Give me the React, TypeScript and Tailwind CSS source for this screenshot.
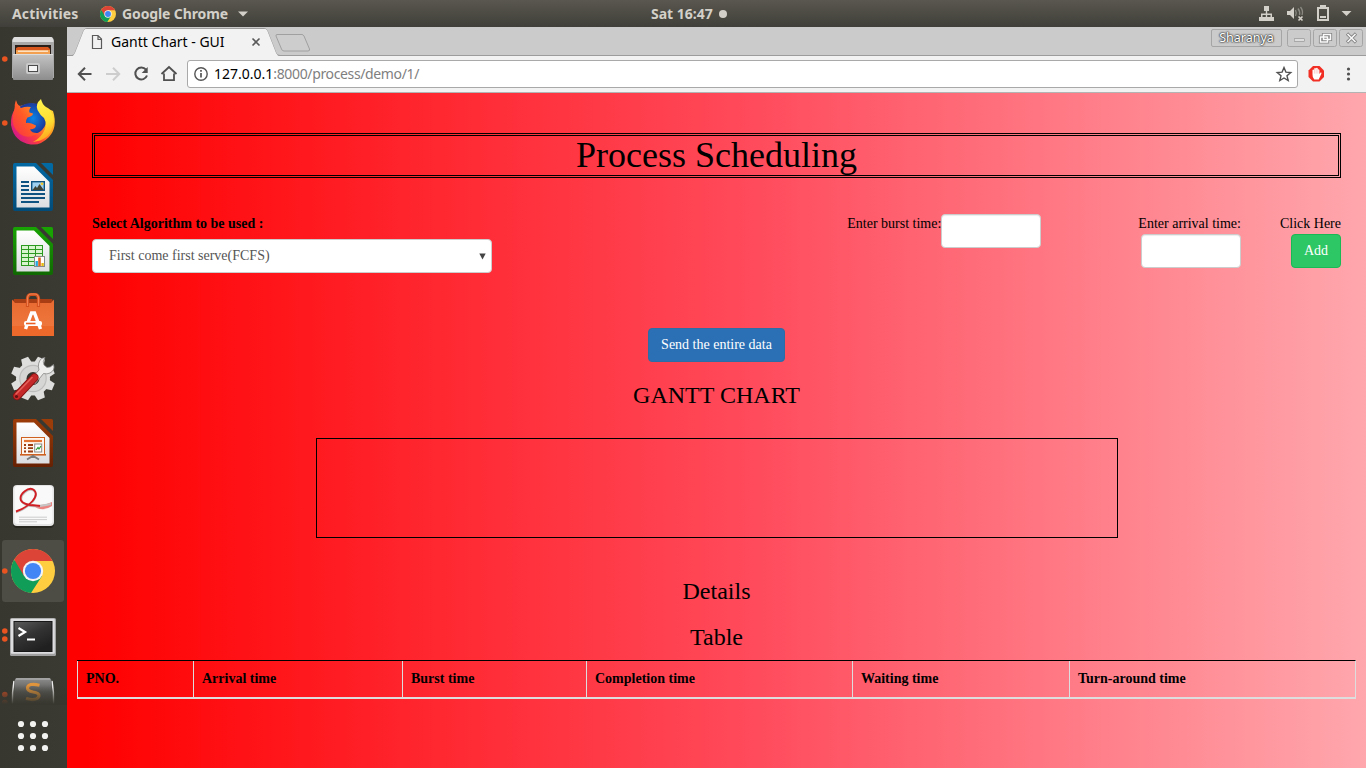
import React from "react";

function ChromeLogo({ size }: { size: number }) {
  return (
    <svg width={size} height={size} viewBox="0 0 44 44">
      <circle cx="22" cy="22" r="22" fill="#ffcd40" />
      <path d="M22 22 L2.9 11 A22 22 0 0 0 20 43.9 L31 27 Z" fill="#0f9d58" />
      <path d="M22 12 H41.6 A22 22 0 0 0 3.2 10.6 L13 27 Z" fill="#db4437" />
      <circle cx="22" cy="22" r="10.2" fill="#f4f4f4" />
      <circle cx="22" cy="22" r="8.1" fill="#4285f4" />
    </svg>
  );
}

function DockItem({ children, dots = [], active = false, height = "h-16" }: { children: React.ReactNode; dots?: number[]; active?: boolean; height?: string }) {
  return (
    <div className={`w-[67px] shrink-0 overflow-hidden ${height}`}>
      <svg width="67" height="64" viewBox="0 0 67 64">
        {active && <rect x="2" y="1" width="62" height="62" rx="3" fill="#4d4c45" />}
        {dots.map((y) => (
          <circle key={y} cx="4.8" cy={y} r="2.8" fill="#e95420" />
        ))}
        {children}
      </svg>
    </div>
  );
}

function DocumentBase({ id, light, dark }: { id: string; light: string; dark: string }) {
  return (
    <>
      <defs>
        <linearGradient id={id} x1="0" y1="0" x2="0" y2="1">
          <stop offset="0" stopColor={light} />
          <stop offset="1" stopColor={dark} />
        </linearGradient>
        <linearGradient id={`${id}paper`} x1="0" y1="0" x2="0" y2="1">
          <stop offset="0" stopColor="#ffffff" />
          <stop offset="1" stopColor="#dcdde0" />
        </linearGradient>
      </defs>
      <path d="M15 8 H36 L53 25 V54 Q53 56 51 56 H15 Q13 56 13 54 V10 Q13 8 15 8Z" fill={`url(#${id})`} />
      <path d="M41 8 H51.5 Q53 8 53 9.5 V20Z" fill={light} />
      <path d="M16.5 11.5 H34 L49.5 27 V52.5 H16.5Z" fill={`url(#${id}paper)`} />
    </>
  );
}

function Dock() {
  return (
    <aside className="flex h-[741px] w-[67px] shrink-0 flex-col bg-linear-to-r from-[#37362f] to-[#3b3a32]">
      <DockItem dots={[32]}>
        <defs>
          <linearGradient id="cab" x1="0" y1="0" x2="0" y2="1">
            <stop offset="0" stopColor="#c4c4c4" />
            <stop offset="1" stopColor="#8d8d8d" />
          </linearGradient>
        </defs>
        <path d="M15 10 H51 Q53 10 54 13 V51 H12 V13 Q13 10 15 10Z" fill="#a9a9a9" />
        <path d="M15 10 H51 Q53 10 53.5 15 H12.5 Q13 10 15 10Z" fill="#dedede" />
        <rect x="15" y="18" width="36" height="9" fill="#2b2019" />
        <path d="M16 21 L18 20 H48 L50 22 V27 H16Z" fill="#d9571d" />
        <path d="M16 23 H50 V27 H16Z" fill="#f3a151" />
        <path d="M18 24.2 H48" stroke="#fff1dc" strokeWidth="1.2" />
        <rect x="13" y="27" width="40" height="26" rx="1" fill="url(#cab)" />
        <path d="M13 27.5 H53" stroke="#dddddd" />
        <rect x="26" y="36" width="14" height="11" rx="2" fill="#c9c9c9" />
        <rect x="28.5" y="38.5" width="9" height="6" fill="#f5f5f5" stroke="#4b4b4b" />
      </DockItem>

      <DockItem dots={[32]}>
        <defs>
          <linearGradient id="fox" x1="1" y1="0.1" x2="0.1" y2="0.8">
            <stop offset="0" stopColor="#ffe83e" />
            <stop offset="0.4" stopColor="#ff9a1f" />
            <stop offset="0.7" stopColor="#ff3d3d" />
            <stop offset="1" stopColor="#d51a86" />
          </linearGradient>
          <linearGradient id="foxFace" x1="0" y1="1" x2="1" y2="0">
            <stop offset="0" stopColor="#f92f4b" />
            <stop offset="0.5" stopColor="#ff5a26" />
            <stop offset="1" stopColor="#ffa62b" />
          </linearGradient>
          <radialGradient id="globe">
            <stop offset="0" stopColor="#0b84e8" />
            <stop offset="1" stopColor="#1a3a9c" />
          </radialGradient>
          <linearGradient id="flame" x1="0.3" y1="0" x2="0.5" y2="1">
            <stop offset="0" stopColor="#fff44f" />
            <stop offset="0.6" stopColor="#ffdd30" />
            <stop offset="1" stopColor="#ff9f1e" />
          </linearGradient>
        </defs>
        <path d="M16 9 Q17 14 20 15 Q33 10 42 15 L53 20 Q58 36 49 46 Q41 54.5 31 53.5 Q14 51 11 34 Q10.500 24 15 18 Q14 14 16 9Z" fill="url(#fox)" />
        <path d="M20 15.500 Q29 9.500 40 13.500 L45 25 Q48 33 42 39 Q36 45 28 41 L22 32Z" fill="url(#globe)" />
        <path d="M16 10 Q17 15 21 17 Q26 15 31 16 Q28.500 19 29.500 21.500 L33 22.500 Q33 25 27.500 26.500 Q25.500 29 26 32 Q30 31 36 34.500 Q36 38 30 38.500 Q32 42.500 38 42 Q28 49 20 43 Q11 36 13 25Z" fill="url(#foxFace)" />
        <path d="M41 8 Q35 13 37.500 19 Q40 24 44 27 Q48 34 43 42 Q39 48 33 51 Q49 49 52 37 Q55 31 53 25 Q51 18 46 16 Q42 13 41 8Z" fill="url(#flame)" />
      </DockItem>

      <DockItem>
        <DocumentBase id="writer" light="#0369a3" dark="#024b78" />
        <g stroke="#0d5280" strokeWidth="2">
          <path d="M21 27 H29 M21 31 H29 M21 35 H29 M21 39 H45 M21 43 H45 M21 47 H39" />
        </g>
        <rect x="31.7" y="26.7" width="12.6" height="8.6" fill="#9fd0f0" stroke="#0d5280" strokeWidth="1.4" />
        <path d="M32.5 35 L35.5 31 L37 33 L39.5 29 L43.8 35Z" fill="#404436" />
        <circle cx="42" cy="28.8" r="1.4" fill="#f1c62e" />
      </DockItem>

      <DockItem>
        <DocumentBase id="calc" light="#18a303" dark="#106802" />
        <rect x="21" y="26" width="22" height="21" fill="#2c9a20" />
        <g fill="#d9f5d0">
          {[27, 31, 35, 39, 43].map((y) =>
            [22, 29, 36].map((x) => <rect key={`${x}-${y}`} x={x} y={y} width="6" height="3" />),
          )}
        </g>
        <rect x="34.5" y="37.5" width="10" height="10" fill="#fff" stroke="#878787" />
        <path d="M36.7 47 V42" stroke="#27a7dc" strokeWidth="2.4" />
        <path d="M39.5 47 V38.5" stroke="#dd641e" strokeWidth="2.6" />
        <path d="M42.6 47 V44" stroke="#e8bb12" strokeWidth="2.4" />
      </DockItem>

      <DockItem>
        <defs>
          <linearGradient id="bag" x1="0" y1="0" x2="0" y2="1">
            <stop offset="0" stopColor="#e76a31" />
            <stop offset="1" stopColor="#f17b40" />
          </linearGradient>
        </defs>
        <path d="M14 16 H52 L54 21 H12Z" fill="#a93e14" />
        <path d="M12 16.500 L15 20 H51 L54 16.500 V53 H12Z" fill="url(#bag)" />
        <path d="M12 43 H54 V53 H12Z" fill="#ed682b" />
        <path d="M27.5 24 V15 Q28 11.5 31 11.5 H35 Q38 11.5 38.5 15 V24" fill="none" stroke="#d3511e" strokeWidth="3.2" />
        <path d="M27.5 23 V15 Q28 11 31 11 H35 Q38 11 38.5 15 V23" fill="none" stroke="#ef8250" strokeWidth="1.200" />
        <path d="M25.5 46 L31.5 30 H34.5 L40.5 46" fill="none" stroke="#fff" strokeWidth="3.4" />
        <rect x="24" y="38" width="18" height="5" rx="2" fill="#fff" />
        <path d="M26 40.5 H35.500" stroke="#e95f25" strokeWidth="1.6" />
      </DockItem>

      <DockItem>
        {[22.5, 67.5, 112.5, 157.5, 202.5, 247.5, 292.5, 337.5].map((a) => (
          <path key={a} d="M27.8 17 L29.3 9.500 H36.7 L38.2 17Z" fill="#dededd" transform={`rotate(${a} 33 31.5)`} />
        ))}
        <circle cx="33" cy="31.5" r="17" fill="#dededd" />
        <circle cx="33" cy="31.5" r="13.8" fill="#bdbdbc" />
        <circle cx="33" cy="31.5" r="12.6" fill="#d6d6d5" />
        <circle cx="33" cy="31.5" r="6.5" fill="#34342f" />
        <path d="M30 33 L39 23 Q37 16 41.500 11.500 L45 10.500 Q42 15 44 18 L47 20.500 Q50 21 53.500 17.500 Q55.500 23 50 26 Q47 27.500 43.500 26.500 L35 37Z" fill="#eeeeed" stroke="#858584" strokeWidth="0.8" />
        <path d="M34.500 30.500 L17 49" stroke="#861414" strokeWidth="8.4" strokeLinecap="round" />
        <path d="M34.500 30.500 L17 49" stroke="#c42828" strokeWidth="6.6" strokeLinecap="round" />
        <path d="M32 30.500 L16 47" stroke="#e4605a" strokeWidth="1.6" strokeLinecap="round" />
        <circle cx="16.500" cy="49.500" r="1.6" fill="#621111" />
      </DockItem>

      <DockItem>
        <DocumentBase id="impress" light="#9c3c08" dark="#662103" />
        <rect x="21.5" y="26.5" width="23" height="17" fill="#fff7ed" stroke="#ce6020" />
        <path d="M24 30 H42" stroke="#e37333" strokeWidth="2.2" />
        <path d="M24 34 H26 M24 37.2 H26 M24 40.5 H26 M28 34 H33 M28 37.2 H33 M28 40.5 H33" stroke="#9b3d11" strokeWidth="1.8" />
        <rect x="34.7" y="33" width="7" height="8" fill="#fff" stroke="#878787" />
        <path d="M36 39 L38 36.5 L39 38 L41 35" fill="none" stroke="#2c9e35" strokeWidth="1.2" />
        <path d="M20 43.8 H46" stroke="#ce6020" strokeWidth="1.6" />
        <path d="M33 44 V47 M27 48.5 L32 45.5 H34 L39 48.5" fill="none" stroke="#7b7b7b" strokeWidth="1.9" />
      </DockItem>

      <DockItem>
        <rect x="13" y="11" width="41" height="42" rx="4" fill="#272720" />
        <rect x="13" y="10" width="41" height="41" rx="4" fill="#e4e4e4" />
        <rect x="14.5" y="11" width="38" height="38" rx="3" fill="#f9f9f9" />
        <path d="M31 29 Q42 32 52 27 V31 Q42 38 32 30Z" fill="#eb8481" />
        <path d="M16 37.500 C31 32 39 22 34.500 16.500 C29 11.500 19 20 22 26.500 C25 32.500 38 32 51 29" fill="none" stroke="#c5c5c5" strokeWidth="1.8" />
        <path d="M16 36.500 C31 31 39 21 34.500 15.500 C29 10.500 18.500 19 21 25.500 C24 31.500 36 30 40 31" fill="none" stroke="#cf1f24" strokeWidth="1.9" />
        <path d="M19 42.2 H47 M19 44.6 H47 M19 46.8 H37" stroke="#c6c6c6" strokeWidth="0.9" />
      </DockItem>

      <DockItem dots={[32]} active>
        <g transform="translate(11 10)">
          <ChromeLogo size={44} />
        </g>
      </DockItem>

      <DockItem dots={[28, 36]}>
        <defs>
          <linearGradient id="term" x1="0" y1="0" x2="0.6" y2="1">
            <stop offset="0" stopColor="#5a5a5a" />
            <stop offset="0.5" stopColor="#333333" />
            <stop offset="1" stopColor="#202020" />
          </linearGradient>
        </defs>
        <rect x="10" y="15" width="46" height="38" rx="1.5" fill="#a0a0a1" />
        <rect x="10.8" y="15.8" width="44" height="35" rx="1" fill="#dddddf" />
        <rect x="13.5" y="18" width="39" height="31" fill="#171717" />
        <rect x="14.5" y="19" width="37" height="29" fill="url(#term)" />
        <path d="M18.5 25 L25 29 L18.5 33" fill="none" stroke="#fff" strokeWidth="2.2" />
        <path d="M27 36.5 H35" stroke="#fff" strokeWidth="2" />
      </DockItem>

      <DockItem height="h-[38px]">
        <defs>
          <linearGradient id="fadeDown" gradientUnits="userSpaceOnUse" x1="0" y1="18" x2="0" y2="37">
            <stop offset="0" stopColor="#38372f" stopOpacity="0" />
            <stop offset="1" stopColor="#38372f" />
          </linearGradient>
          <linearGradient id="subl" gradientUnits="userSpaceOnUse" x1="0" y1="11" x2="0" y2="38">
            <stop offset="0" stopColor="#8e8e8e" />
            <stop offset="0.5" stopColor="#5a5a58" />
            <stop offset="1" stopColor="#484844" />
          </linearGradient>
        </defs>
        <circle cx="4.8" cy="27.5" r="2.8" fill="#c84c24" />
        <circle cx="4.8" cy="35.5" r="2.8" fill="#b44a24" />
        <path d="M14 14 Q12 25 12.5 37 M52 14 Q54 25 53.5 37" stroke="#eee" strokeWidth="1.5" fill="none" />
        <path d="M17 11 H49 Q51 11 51.5 14 L53 53 H13 L14.5 14 Q15 11 17 11Z" fill="url(#subl)" />
        <path d="M16 12 H50" stroke="#b8b8b8" />
        <path d="M39.5 18.2 Q28 15.5 27.5 21 Q27.5 24 33 25 Q39.5 26 39 29 Q37 34.5 26 31.5" fill="none" stroke="#e0953c" strokeWidth="3.2" />
        <rect x="0" y="18" width="67" height="20" fill="url(#fadeDown)" />
      </DockItem>

      <svg width="67" height="63" viewBox="0 0 67 63" className="shrink-0">
        {[19, 31, 43].map((y) => [21, 33, 45].map((x) => <circle key={`${x}-${y}`} cx={x} cy={y} r="3.1" fill="#f2f2f0" />))}
      </svg>
    </aside>
  );
}

function SystemBar() {
  return (
    <header className="grid h-[27px] grid-cols-[1fr_auto_1fr] items-center bg-linear-to-b from-[#59574f] to-[#403f39] font-['Noto_Sans',sans-serif] text-[14px] leading-[27px] font-bold text-[#d3d0c9]">
      <div className="flex items-center pl-3">
        <span className="w-[88px] tracking-[0.15px]">Activities</span>
        <ChromeLogo size={16} />
        <span className="ml-[6px] w-[112px] whitespace-nowrap tracking-[-0.12px]">Google Chrome</span>
        <svg width="10" height="6" viewBox="0 0 10 6" className="ml-[4px]"><path d="M0 .5H10L5 5.5Z" fill="#d3d0c9" /></svg>
      </div>
      <div className="flex w-[88px] items-center justify-between pl-3 whitespace-nowrap">
        Sat 16:47
        <span className="size-2 rounded-full bg-[#d3d0c9]" />
      </div>
      <div className="flex items-center justify-end pr-[14px]">
        <svg width="94" height="19" viewBox="0 0 94 19" fill="#d3d0c9">
          <path d="M6 2h5v5H9.2v2.500H14v3.500h2v4h-5v-4h1.500v-2H9.200v2H11v4H6v-4h1.800v-2H4.500v2H6v4H1v-4h2V9.500h4.800V7H6Z" />
          <path d="M29 7h3l4-4v12l-4-4h-3Z" />
          <path d="M37.5 6Q39 9 37.5 12M40 4.500Q42.500 8 41.500 11M42.500 3Q45.500 7 44 11" fill="none" stroke="#8b8982" strokeWidth="1.3" />
          <path d="m40.5 12.500 4 4m0-4-4 4" stroke="#d3d0c9" strokeWidth="1.7" />
          <path d="M62 1h6v2h3v14H59V3h3Zm-1 4v10h8V5Z" fillRule="evenodd" />
          <path d="M62 12h6v2h-6Z" />
          <path d="M83.500 7h10l-5 5Z" />
        </svg>
      </div>
    </header>
  );
}

function BrowserChrome() {
  return (
    <div className="h-[66px] font-['Noto_Sans',sans-serif]">
      <div className="relative z-10 flex h-7 justify-between bg-[#cbcbcb] shadow-[0_1px_0_#9c9c9c]">
        <div className="relative flex h-[29px] w-[245px]">
          <svg width="245" height="29" viewBox="0 0 245 29" className="absolute inset-0">
            <path d="M0 28.5H5Q7 28.5 8 26L17 3Q18 1.5 20 1.5H197Q199 1.5 200 3L209 26Q210 28.5 213 28.5H245" fill="#f2f2f2" stroke="#9c9c9c" />
            <path d="M6 29L8 26L17 3Q18 2 20 2H197Q199 2 200 3L209 26L211 29Z" fill="#f2f2f2" />
            <path d="M210 7.5H235Q236 7.5 237 9L242.5 22Q243 24 241 24H217Q215 24 214.5 22L209 9Q208.7 7.5 210 7.5Z" fill="#cdcdcd" stroke="#a0a0a0" />
            <path d="M25.5 8.5H31L34.5 12V21.5H25.5ZM31 8.5V12.5H34.5" fill="none" stroke="#5a5a5a" strokeWidth="1.2" />
            <path d="M185.5 11.5L192.5 18.5M192.5 11.5L185.5 18.5" stroke="#5a5a5a" strokeWidth="1.6" />
          </svg>
          <span className="relative ml-[44px] text-[14px] leading-[29px] whitespace-nowrap text-black">Gantt Chart - GUI</span>
        </div>
        <div className="flex items-start pt-[2px] pr-[3px] text-[#555]">
          <div className="flex h-[18px] w-[71px] items-center justify-center rounded-[2px] border border-[#a5a5a5] text-[12.5px] leading-none text-white [text-shadow:0_0_2px_#333,0_0_2px_#333,0_0_1px_#333]">Sharanya</div>
          <svg width="76" height="19" viewBox="0 0 76 19" className="ml-[5px]" fill="none">
            <g stroke="#a5a5a5">
              <rect x=".5" y=".5" width="23" height="17" rx="2" />
              <rect x="26.5" y=".5" width="23" height="17" rx="2" />
              <rect x="52.5" y=".5" width="23" height="17" rx="2" />
            </g>
            <g stroke="#858585" strokeWidth="3.2">
              <path d="M7 11H17.500M60 4.500L69 13.500M69 4.500L60 13.500M36.5 5.5H43.5V10.5H36.5ZM33.5 8H40.5V13H33.5Z" />
            </g>
            <g stroke="#fafafa" strokeWidth="1.5">
              <path d="M7.5 11H17M60.5 5L68.500 13M68.500 5L60.5 13M36.5 5.5H43.5V10.5H36.5ZM33.5 8H40.5V13H33.5Z" />
            </g>
          </svg>
        </div>
      </div>
      <div className="flex h-[38px] items-center border-b border-[#b3b3b3] bg-[#f2f2f2]">
        <svg width="120" height="37" viewBox="0 0 120 37" className="shrink-0" fill="none" stroke="#505050" strokeWidth="2">
          <path d="M24.5 19H12M18 12.8L11.8 19L18 25.2" />
          <path d="M39 19H51.5M46 12.8L52.2 19L46 25.2" stroke="#cdcdcd" />
          <path d="M79 14.7A6 6 0 1 0 80 20.5" />
          <path d="M80.7 12V18H74.7Z" fill="#505050" stroke="none" />
          <path d="M94.5 19L102 12L109.5 19M97 18.5V25.2H107V18.5" strokeWidth="1.8" />
        </svg>
        <div className="flex h-7 w-[1111px] items-center rounded-[3px] border border-[#a9a9a9] bg-white">
          <svg width="26" height="26" viewBox="0 0 26 26" fill="none" stroke="#555">
            <circle cx="13" cy="13" r="6.2" strokeWidth="1.4" />
            <path d="M13 12V16.5M13 9V10.8" strokeWidth="1.7" />
          </svg>
          <span className="flex-1 text-[14px] leading-none tracking-[-0.36px] text-[#808080]"><span className="tracking-normal text-black">127.0.0.1</span>:8000/process/demo/1/</span>
          <svg width="26" height="26" viewBox="0 0 26 26"><path d="M13 6.5L14.9 11.1L19.8 11.5L16 14.8L17.2 19.6L13 17L8.8 19.6L10 14.8L6.2 11.5L11.1 11.1Z" fill="none" stroke="#505050" strokeWidth="1.4" /></svg>
        </div>
        <svg width="68" height="37" viewBox="0 0 68 37">
          <g transform="translate(0 .6)">
            <path d="M15 10.5H21.5L26 15V21.5L21.5 26H15L10.5 21.5V15Z" fill="#f12f24" />
            <path d="M14.500 19V14.5Q15.2 13.4 16.2 14.5V13Q17 11.800 18 13V12.6Q19 11.600 19.8 13V14Q20.6 13.200 21.4 14.4V18.500L22.5 17Q24.200 16.800 23.300 18.3L20.7 23.8H16.3Q14.2 21.5 14.500 19Z" fill="#fff" />
            <path d="M16.4 14V18M18.100 13V18M19.9 14V18" stroke="#f5a09a" strokeWidth=".5" />
          </g>
          <g fill="#505050"><circle cx="50.5" cy="14" r="1.6" /><circle cx="50.5" cy="19" r="1.6" /><circle cx="50.5" cy="24" r="1.6" /></g>
        </svg>
      </div>
    </div>
  );
}

const inputClass = "block h-[34px] w-[100px] rounded-[4px] border border-[#cccccc] bg-white shadow-[inset_0_1px_1px_rgba(0,0,0,0.075)] outline-none";

function Page() {
  return (
    <main className="h-[675px] overflow-hidden bg-[linear-gradient(to_right,#ff0000_1.5%,#ff4b5c_53%,#ffa7ad_100%)] pt-10 font-['Liberation_Serif',serif] text-[14px] leading-5 text-black">
      <h1 className="mx-[25px] h-[45px] border-[3px] border-double border-black text-center text-[36px] leading-[39px]">Process Scheduling</h1>
      <section className="mx-[25px] mt-9 flex items-start">
        <div className="w-[400px]">
          <label className="block font-bold">Select Algorithm to be used :</label>
          <div className="mt-[5px] flex h-[34px] items-center justify-between rounded-[4px] border border-[#cccccc] bg-white pr-[5px] pl-4 text-[#555555]">
            <span>First come first serve(FCFS)</span>
            <svg width="7" height="7" viewBox="0 0 7 7"><path d="M.3.5H6.7L3.5 6.5Z" fill="#444" /></svg>
          </div>
        </div>
        <div className="ml-auto flex items-start">
          <span>Enter burst time:</span>
          <input className={inputClass} />
        </div>
        <div className="ml-[97px] flex flex-col items-end">
          <span>Enter arrival time:</span>
          <input className={inputClass} />
        </div>
        <div className="ml-[39px] flex flex-col items-end">
          <span>Click Here</span>
          <button className="h-[34px] w-[50px] rounded-[4px] border border-[#19b955] bg-[#2dc765] text-white">Add</button>
        </div>
      </section>
      <div className="mt-[55px] flex justify-center">
        <button className="h-[34px] w-[137px] rounded-[4px] border border-[#2e6da4] bg-[#2b70b5] text-white">Send the entire data</button>
      </div>
      <h3 className="mt-5 text-center text-[24px] leading-[26px]">GANTT CHART</h3>
      <div className="mx-auto mt-[30px] h-[100px] w-[802px] border border-black" />
      <h3 className="mt-10 text-center text-[24px] leading-[26px]">Details</h3>
      <h3 className="mt-5 text-center text-[24px] leading-[26px]">Table</h3>
      <div className="mx-[10px] mt-[10px] grid h-[39px] grid-cols-[116px_209px_184px_266px_217px_1fr] border-t border-r border-b-2 border-t-black border-r-[#dddddd] border-b-[#dddddd] font-bold">
        {["PNO.", "Arrival time", "Burst time", "Completion time", "Waiting time", "Turn-around time"].map((name) => (
          <div key={name} className="border-l border-[#dddddd] pt-2 pl-2">{name}</div>
        ))}
      </div>
    </main>
  );
}

export default function App() {
  return (
    <div className="h-[768px] w-[1366px] overflow-hidden">
      <SystemBar />
      <div className="flex">
        <Dock />
        <div className="w-[1299px]">
          <BrowserChrome />
          <Page />
        </div>
      </div>
    </div>
  );
}
